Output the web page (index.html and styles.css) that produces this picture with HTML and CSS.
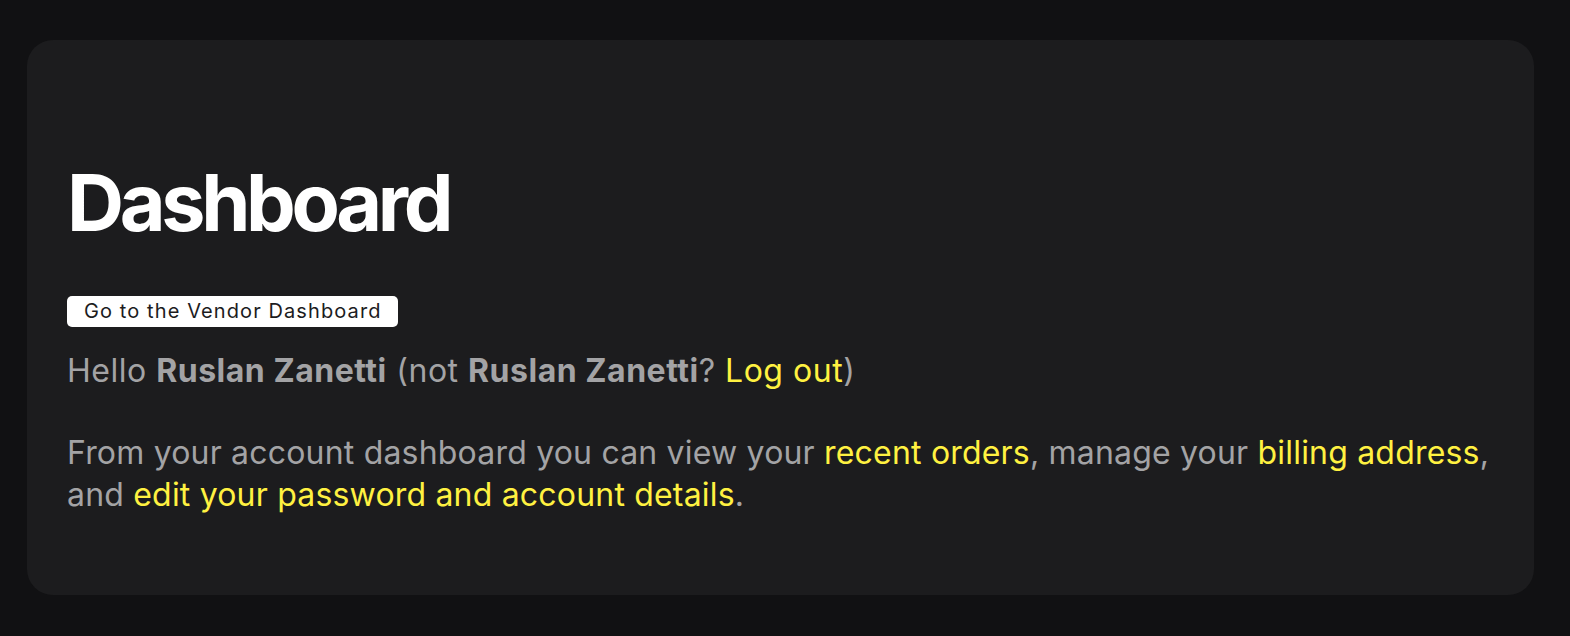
FILE: index.html
```html
<!DOCTYPE html>
<html lang="en">
<head>
<meta charset="utf-8">
<title>Dashboard</title>
<link rel="stylesheet" href="styles.css">
</head>
<body>
<main class="card">
  <h1 class="title">Dashboard</h1>
  <a class="vendor-btn" href="#">Go to the Vendor Dashboard</a>
  <p class="hello">Hello <strong>Ruslan Zanetti</strong> (not <strong>Ruslan Zanetti</strong>? <a href="#">Log out</a>)</p>
  <p class="intro">From your account dashboard you can view your <a href="#">recent orders</a>, manage your <a href="#">billing address</a>, and <a href="#">edit your password and account details</a>.</p>
</main>
</body>
</html>
```
FILE: styles.css
```css
html, body {
  margin: 0;
  padding: 0;
  background: #111113;
}
body {
  padding: 40px 36px 42px 27px;
  font-family: Inter, "Noto Sans", sans-serif;
}
.card {
  background: #1c1c1e;
  border-radius: 26px;
  padding: 114px 40px 79px 40px;
  display: flex;
  flex-direction: column;
  align-items: flex-start;
}
.title {
  margin: 0;
  font-size: 79px;
  line-height: 96px;
  font-weight: 700;
  color: #ffffff;
  letter-spacing: -0.055em;
}
.vendor-btn {
  margin-top: 46px;
  background: #ffffff;
  color: #1c1c1e;
  border-radius: 5px;
  font-size: 20px;
  letter-spacing: 0.055em;
  line-height: 31px;
  height: 31px;
  padding: 0 16px 0 17px;
  text-decoration: none;
  box-sizing: border-box;
}
.hello, .intro {
  margin: 0;
  font-size: 32px;
  line-height: 42px;
  color: #a3a3a5;
}
.hello { margin-top: 23px; letter-spacing: 0.016em; }
.intro { margin-top: 40px; letter-spacing: 0.006em; }
.hello strong { font-weight: 700; }
.card p a {
  color: #fff141;
  text-decoration: none;
}
```
